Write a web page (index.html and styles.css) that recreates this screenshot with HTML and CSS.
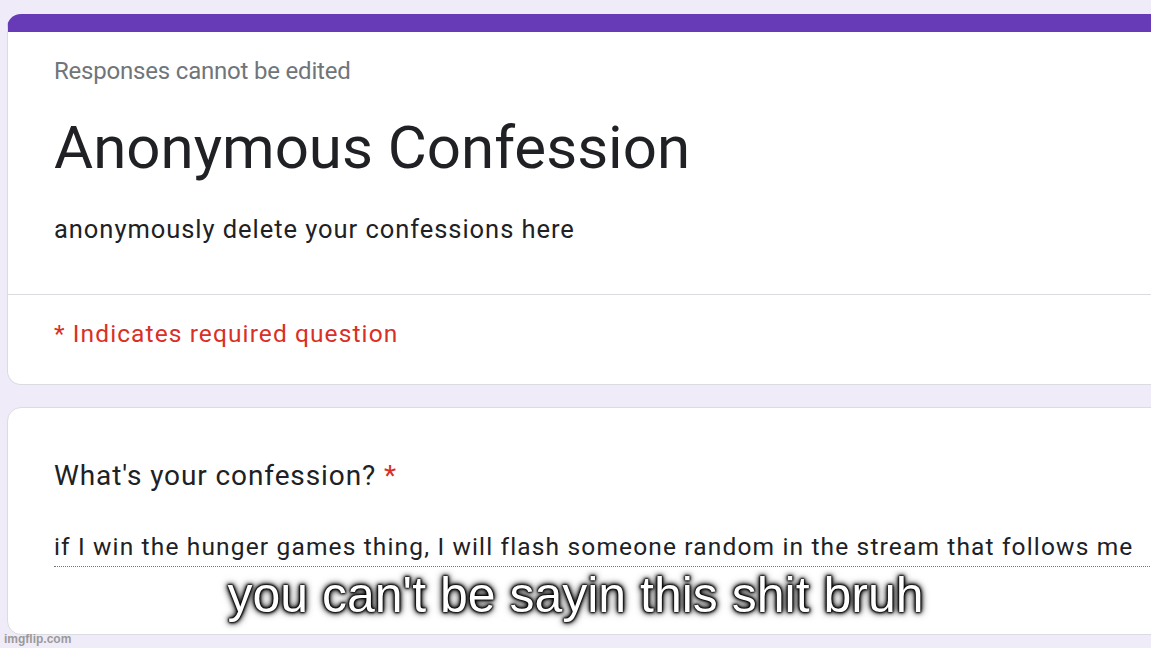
FILE: index.html
```html
<!DOCTYPE html>
<html lang="en">

<head>
    <meta charset="UTF-8">
    <meta name="viewport" content="width=device-width, initial-scale=1.0">
    <title>Anonymous Confession</title>
    <link rel="stylesheet" href="styles.css">
</head>

<body>
    <div class="form">
        <div class="card header-card">
            <div class="header-top">
                <p class="notice">Responses cannot be edited</p>
                <h1 class="title">Anonymous Confession</h1>
                <p class="description">anonymously delete your confessions here</p>
            </div>
            <div class="header-bottom">
                <p class="required-note">* Indicates required question</p>
            </div>
        </div>

        <div class="card question-card">
            <p class="question">What's your confession? <span class="star">*</span></p>
            <div class="answer">if I win the hunger games thing, I will flash someone random in the stream that follows me</div>
        </div>
    </div>

    <div class="caption">you can't be sayin this shit bruh</div>
    <div class="watermark">imgflip.com</div>
</body>

</html>
```

FILE: styles.css
```css
body {
    font-family: 'Roboto', 'Liberation Sans', sans-serif;
    background-color: #f0ebf8;
    margin: 0;
    padding: 14px 0 0 7px;
    width: 1151px;
    height: 648px;
    box-sizing: border-box;
    overflow: hidden;
    position: relative;
}

.form {
    width: 1240px;
    display: flex;
    flex-direction: column;
    gap: 22px;
}

.card {
    background-color: #fff;
    border: 1px solid #dadce0;
    border-radius: 14px;
    overflow: hidden;
}

.header-card {
    border-top: 18px solid #673ab7;
    height: 352px;
}

.header-top {
    padding: 25px 46px 0;
    height: 263px;
    border-bottom: 1px solid #dadce0;
    box-sizing: border-box;
}

p {
    margin: 0;
}

.notice {
    font-size: 24px;
    line-height: 28px;
    letter-spacing: -0.2px;
    color: #70757a;
}

.title {
    font-size: 60px;
    font-weight: 400;
    line-height: 72px;
    color: #202124;
    margin: 27px 0 0;
}

.description {
    font-size: 25.5px;
    line-height: 30px;
    letter-spacing: 0.95px;
    color: #202124;
    margin-top: 30px;
}

.header-bottom {
    padding: 24px 46px 0;
}

.required-note {
    font-size: 24.5px;
    line-height: 30px;
    letter-spacing: 1.1px;
    color: #d93025;
}

.question-card {
    height: 228px;
    padding: 51px 46px 0;
    box-sizing: border-box;
}

.question {
    font-size: 28px;
    line-height: 34px;
    letter-spacing: 0.9px;
    color: #202124;
}

.star {
    color: #d93025;
}

.answer {
    margin-top: 39px;
    font-size: 24.5px;
    line-height: 30px;
    letter-spacing: 1.15px;
    white-space: nowrap;
    color: #202124;
    padding-bottom: 4px;
    border-bottom: 1px dotted #70757a;
}

.caption {
    position: absolute;
    left: 0;
    right: 0;
    top: 566px;
    text-align: center;
    font-family: 'Liberation Sans', Arial, sans-serif;
    font-size: 50px;
    line-height: 58px;
    color: #fff;
    text-shadow: 0 0 1px #000, 0 0 2px #000, 0 0 2px #000, 0 0 3px #000, 0 0 4px #000, 0 0 6px #000, 0 0 9px rgba(0, 0, 0, 0.7);
}

.watermark {
    position: absolute;
    left: 4px;
    bottom: 2px;
    font-family: 'Liberation Sans', Arial, sans-serif;
    font-size: 12px;
    font-weight: bold;
    color: #9a9a9a;
}
```
